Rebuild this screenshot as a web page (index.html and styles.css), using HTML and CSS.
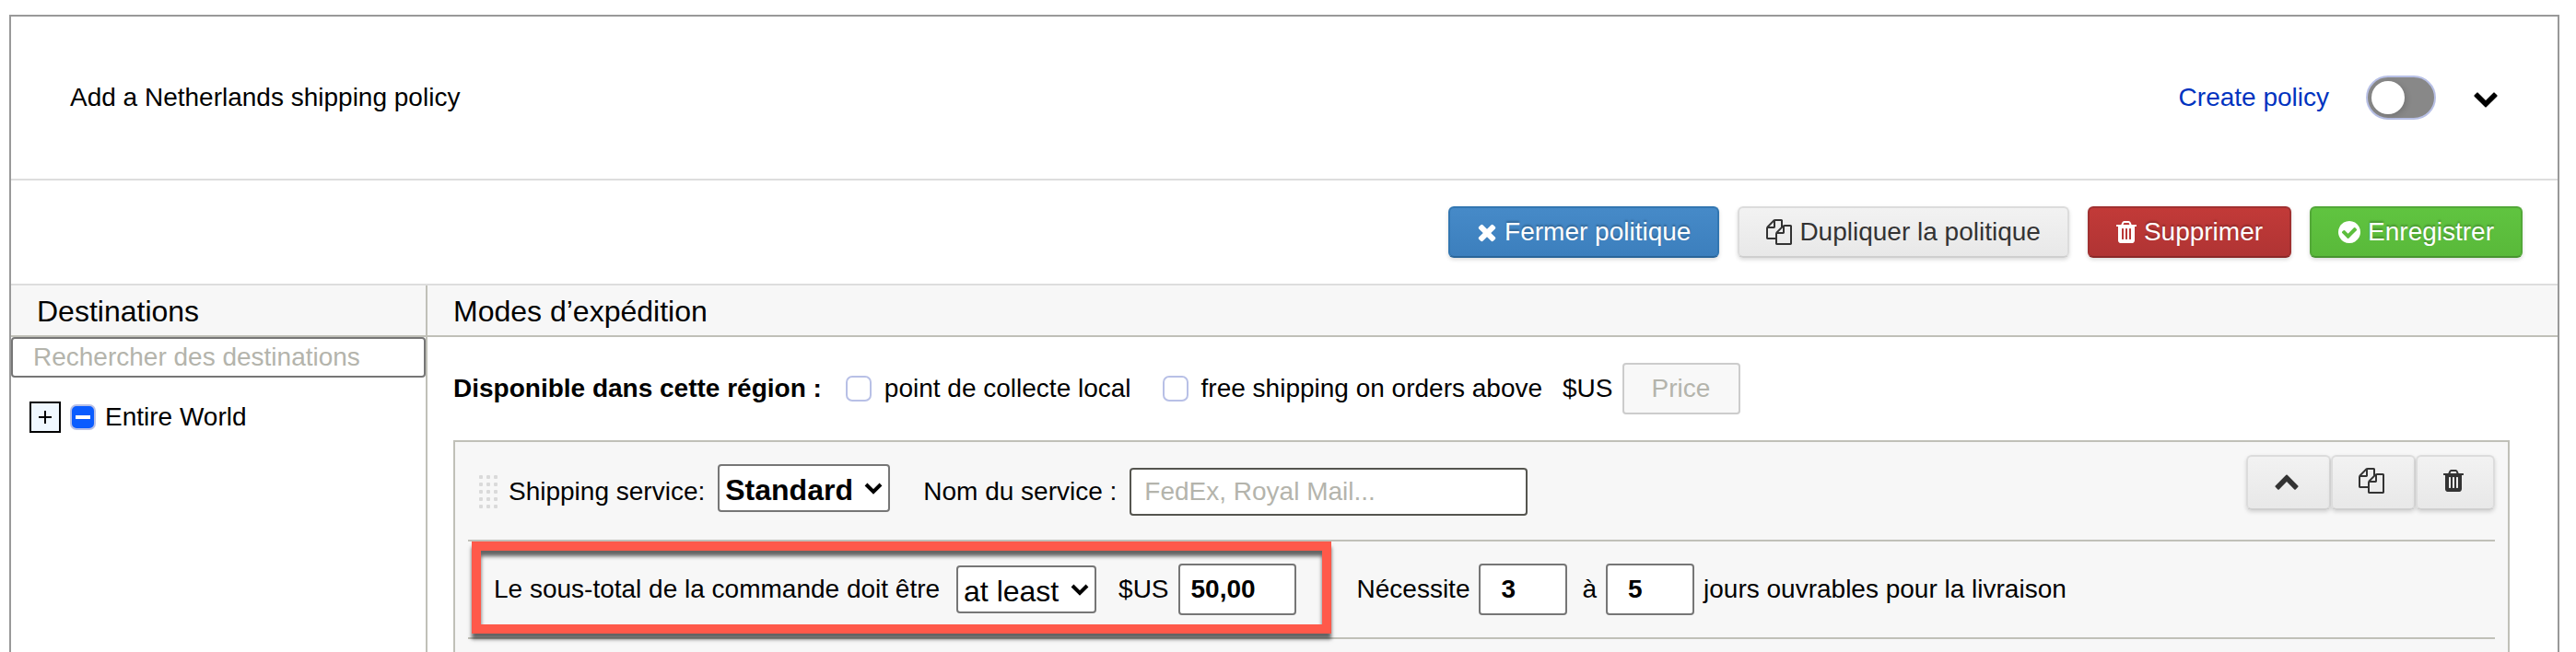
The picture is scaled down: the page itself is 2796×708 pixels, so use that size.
FILE: index.html
```html
<!DOCTYPE html>
<html lang="fr">
<head>
    <meta charset="UTF-8">
    <meta name="viewport" content="width=device-width, initial-scale=1.0">
    <title>Shipping policy</title>
    <link rel="stylesheet" href="styles.css">
</head>
<body>
    <!-- shared icon shapes -->
    <svg class="sprite" aria-hidden="true">
        <symbol id="i-times" viewBox="192 0 1408 1792"><path d="M1490 1322q0 40-28 68l-136 136q-28 28-68 28t-68-28l-294-294-294 294q-28 28-68 28t-68-28l-136-136q-28-28-28-68t28-68l294-294-294-294q-28-28-28-68t28-68l136-136q28-28 68-28t68 28l294 294 294-294q28-28 68-28t68 28l136 136q28 28 28 68t-28 68l-294 294 294 294q28 28 28 68z"/></symbol>
        <symbol id="i-copy" viewBox="0 0 1792 1792"><path d="M1696 384q40 0 68 28t28 68v1216q0 40-28 68t-68 28h-960q-40 0-68-28t-28-68v-288h-544q-40 0-68-28t-28-68v-672q0-40 20-88t48-76l408-408q28-28 76-48t88-20h416q40 0 68 28t28 68v328q68-40 128-40h416zm-544 213l-299 299h299v-299zm-640-384l-299 299h299v-299zm196 647l316-316v-416h-384v416q0 40-28 68t-68 28h-416v640h512v-256q0-40 20-88t48-76zm956 804v-1152h-384v416q0 40-28 68t-68 28h-416v640h896z"/></symbol>
        <symbol id="i-trash" viewBox="192 0 1408 1792"><path d="M704 1376v-704q0-14-9-23t-23-9h-64q-14 0-23 9t-9 23v704q0 14 9 23t23 9h64q14 0 23-9t9-23zm256 0v-704q0-14-9-23t-23-9h-64q-14 0-23 9t-9 23v704q0 14 9 23t23 9h64q14 0 23-9t9-23zm256 0v-704q0-14-9-23t-23-9h-64q-14 0-23 9t-9 23v704q0 14 9 23t23 9h64q14 0 23-9t9-23zm-544-992h448l-48-117q-7-9-17-11h-317q-10 2-17 11zm928 32v64q0 14-9 23t-23 9h-96v948q0 83-47 143.5t-113 60.5h-832q-66 0-113-58.5t-47-141.5v-952h-96q-14 0-23-9t-9-23v-64q0-14 9-23t23-9h309l70-167q15-37 54-63t79-26h320q40 0 79 26t54 63l70 167h309q14 0 23 9t9 23z"/></symbol>
        <symbol id="i-check" viewBox="128 0 1536 1792"><path d="M1412 734q0-28-18-46l-91-90q-19-19-45-19t-45 19l-408 407-226-226q-19-19-45-19t-45 19l-91 90q-18 18-18 46 0 27 18 45l362 362q19 19 45 19 27 0 46-19l543-543q18-18 18-45zm252 162q0 209-103 385.5t-279.5 279.5-385.5 103-385.5-103-279.5-279.5-103-385.5 103-385.5 279.5-279.5 385.5-103 385.5 103 279.5 279.5 103 385.5z"/></symbol>
        <symbol id="i-down" viewBox="0 0 1792 1792"><path d="M1683 808l-742 741q-19 19-45 19t-45-19l-742-741q-19-19-19-45.5t19-45.5l166-165q19-19 45-19t45 19l531 531 531-531q19-19 45-19t45 19l166 165q19 19 19 45.5t-19 45.5z"/></symbol>
        <symbol id="i-up" viewBox="0 0 1792 1792"><path d="M1683 1331l-166 165q-19 19-45 19t-45-19l-531-531-531 531q-19 19-45 19t-45-19l-166-165q-19-19-19-45.5t19-45.5l742-741q19-19 45-19t45 19l742 741q19 19 19 45.5t-19 45.5z"/></symbol>
    </svg>

    <div class="policy">
        <div class="policy-header">
            <span class="policy-title">Add a Netherlands shipping policy</span>
            <label class="create-label" for="createPolicy">Create policy</label>
            <input type="checkbox" id="createPolicy" class="toggle">
            <button type="button" class="collapse" aria-label="Ouvrir"><svg class="icon"><use href="#i-down"/></svg></button>
        </div>

        <div class="toolbar">
            <button type="button" class="btn btn-primary"><svg class="icon icon-narrow"><use href="#i-times"/></svg>Fermer politique</button>
            <button type="button" class="btn"><svg class="icon"><use href="#i-copy"/></svg>Dupliquer la politique</button>
            <button type="button" class="btn btn-danger"><svg class="icon icon-narrow"><use href="#i-trash"/></svg>Supprimer</button>
            <button type="button" class="btn btn-success"><svg class="icon icon-round"><use href="#i-check"/></svg>Enregistrer</button>
        </div>

        <div class="columns">
            <div class="destinations">
                <h2>Destinations</h2>
                <input type="text" class="search" placeholder="Rechercher des destinations" aria-label="Rechercher des destinations">
                <div class="tree-row">
                    <button type="button" class="expand" aria-label="Ouvrir">
                        <svg viewBox="0 0 14 14"><path d="M7 0v14M0 7h14"/></svg>
                    </button>
                    <input type="checkbox" id="world" class="check check-partial">
                    <label for="world">Entire World</label>
                </div>
            </div>

            <div class="methods">
                <h2>Modes d’expédition</h2>
                <div class="methods-body">
                    <div class="region">
                        <strong>Disponible dans cette région :</strong>
                        <div class="option">
                            <input type="checkbox" id="pickup" class="check">
                            <label for="pickup">point de collecte local</label>
                        </div>
                        <div class="option">
                            <input type="checkbox" id="free" class="check">
                            <label for="free">free shipping on orders above</label>
                        </div>
                        <div class="money">
                            <label for="freePrice">$US</label>
                            <input type="text" id="freePrice" class="field price center" placeholder="Price" disabled>
                        </div>
                    </div>

                    <div class="service">
                        <div class="service-row">
                            <svg class="handle" viewBox="0 0 24 40">
                                <defs>
                                    <pattern id="dots" width="8" height="8" patternUnits="userSpaceOnUse">
                                        <rect x="2" y="2" width="4" height="4" rx="1" fill="#dadada"/>
                                    </pattern>
                                </defs>
                                <rect width="24" height="40" fill="url(#dots)"/>
                            </svg>
                            <div class="pair">
                                <label for="shipService">Shipping service:</label>
                                <select id="shipService" class="select bold"><option>Standard</option></select>
                            </div>
                            <div class="pair">
                                <label for="serviceName">Nom du service :</label>
                                <input type="text" id="serviceName" class="field name" placeholder="FedEx, Royal Mail...">
                            </div>
                            <div class="btn-group">
                                <button type="button" class="btn" aria-label="Replier"><svg class="icon"><use href="#i-up"/></svg></button>
                                <button type="button" class="btn" aria-label="Dupliquer"><svg class="icon"><use href="#i-copy"/></svg></button>
                                <button type="button" class="btn" aria-label="Supprimer"><svg class="icon icon-narrow"><use href="#i-trash"/></svg></button>
                            </div>
                        </div>

                        <div class="rule-row">
                            <div class="highlight">
                                <label for="rule">Le sous-total de la commande doit être</label>
                                <select id="rule" class="select"><option>at least</option></select>
                                <div class="money">
                                    <label for="amount">$US</label>
                                    <input type="text" id="amount" class="field price bold" value="50,00">
                                </div>
                            </div>
                            <div class="delivery">
                                <label for="minDays">Nécessite</label>
                                <input type="text" id="minDays" class="field days bold" value="3">
                                <label class="to" for="maxDays">à</label>
                                <input type="text" id="maxDays" class="field days bold" value="5">
                                <span>jours ouvrables pour la livraison</span>
                            </div>
                        </div>
                    </div>
                </div>
            </div>
        </div>
    </div>
</body>
</html>
```
FILE: styles.css
```css
* {
    box-sizing: border-box;
}
body {
    margin: 0;
    padding: 16px 18px 0 10px;
    min-height: 100vh;
    display: flex;
    background: #fff;
    color: #000;
    font-family: "Liberation Sans", Arial, sans-serif;
    font-size: 28px;
    line-height: 32px;
}
button, input, select {
    font: inherit;
    color: inherit;
    margin: 0;
}
.sprite {
    display: none;
}
.icon {
    width: 28px;
    height: 28px;
    fill: currentColor;
    flex: none;
}
.icon-narrow {
    width: 22px;
}
.icon-round {
    width: 24px;
}
.policy {
    flex: 1;
    display: flex;
    flex-direction: column;
    border: 2px solid #999;
    border-bottom: 0;
}

/* header */
.policy-header {
    display: flex;
    align-items: center;
    padding: 64px;
    border-bottom: 2px solid #ddd;
}
.policy-title {
    flex: 1;
}
.create-label {
    color: #0033bf;
    margin-right: 40px;
}
.toggle {
    appearance: none;
    width: 76px;
    height: 48px;
    padding: 4px;
    border: 2px solid #b8c0e6;
    border-radius: 24px;
    background: #888;
    margin-right: 40px;
}
.toggle::before {
    content: "";
    display: block;
    width: 36px;
    height: 36px;
    border-radius: 50%;
    background: #fff;
    box-shadow: 2px 2px 6px rgba(0, 0, 0, 0.15);
}
.collapse {
    display: flex;
    padding: 0;
    border: 0;
    background: none;
}

/* buttons */
.toolbar {
    display: flex;
    justify-content: flex-end;
    gap: 20px;
    padding: 28px 38px;
    border-bottom: 2px solid #ddd;
}
.btn {
    display: flex;
    align-items: center;
    gap: 8px;
    height: 56px;
    padding: 0 29px;
    border: 2px solid #dcdcdc;
    border-bottom-color: #cfcfcf;
    border-radius: 6px;
    background: linear-gradient(#f2f2f2, #e8e8e8);
    color: #333;
    box-shadow: 0 2px 4px rgba(0, 0, 0, 0.15);
}
.btn-primary, .btn-danger, .btn-success {
    color: #fff;
    text-shadow: 0 -2px 2px rgba(0, 0, 0, 0.25);
}
.btn-primary {
    background: linear-gradient(#468ac8, #3c7fbd);
    border-color: #3276b1;
    border-bottom-color: #2a6599;
}
.btn-danger {
    background: linear-gradient(#c23a38, #b03434);
    border-color: #a03030;
    border-bottom-color: #8a2828;
}
.btn-success {
    background: linear-gradient(#60c440, #59b93a);
    border-color: #52a838;
    border-bottom-color: #47942f;
}
.btn-group {
    display: flex;
    align-self: flex-start;
    margin-left: auto;
}
.btn-group .btn {
    height: 60px;
    padding: 0 32px 4px 28px;
}

/* columns */
.columns {
    flex: 1;
    display: flex;
}
h2 {
    margin: 0;
    padding: 10px 28px 8px;
    border-bottom: 2px solid #c0c0b8;
    background: #f7f7f7;
    font-size: 32px;
    font-weight: normal;
    line-height: 36px;
}
.destinations {
    width: 452px;
    border-right: 2px solid #c0c0b8;
}
.search {
    display: block;
    width: 100%;
    height: 44px;
    padding: 0 22px;
    border: 2px solid #767676;
    border-radius: 4px;
}
::placeholder {
    color: #b4b4ac;
    opacity: 1;
}
.tree-row {
    display: flex;
    align-items: center;
    gap: 10px;
    padding: 26px 20px;
}
.expand {
    display: flex;
    align-items: center;
    justify-content: center;
    width: 34px;
    height: 34px;
    padding: 0;
    border: 2px solid #000;
    background: #f0f8ff;
}
.expand svg {
    width: 14px;
    height: 14px;
    fill: none;
    stroke: #000;
    stroke-width: 2;
}
.check {
    appearance: none;
    width: 28px;
    height: 28px;
    border: 2px solid #b8c0e6;
    border-radius: 7px;
    background: #fff;
    flex: none;
}
.check-partial {
    background: linear-gradient(#fff, #fff) center / 16px 4px no-repeat #0a5cff;
}

.methods {
    flex: 1;
    display: flex;
    flex-direction: column;
}
.methods-body {
    flex: 1;
    display: flex;
    flex-direction: column;
    padding: 0 52px 0 28px;
}
.region {
    display: flex;
    align-items: center;
    padding: 28px 0;
}
.option {
    display: flex;
    align-items: center;
    gap: 14px;
    margin-left: 26px;
}
.option + .option {
    margin-left: 34px;
}
.money {
    display: flex;
    align-items: center;
    gap: 10px;
    margin-left: 22px;
}
.field {
    height: 56px;
    border: 2px solid #767676;
    border-radius: 4px;
    background: #fff;
    padding: 0 14px;
}
.field:disabled {
    border-color: #ccc;
    background: #f8f8f8;
}
.price {
    width: 128px;
    padding: 0 12px;
}
.center {
    text-align: center;
}
.days {
    width: 96px;
    padding: 0 22px;
}
.name {
    width: 432px;
    height: 52px;
    border-color: #55554f;
}
.bold {
    font-weight: bold;
}
.select {
    appearance: none;
    height: 52px;
    padding: 4px 38px 0 6px;
    border: 2px solid #767676;
    border-radius: 4px;
    background: #fff url("data:image/svg+xml,%3Csvg xmlns='http://www.w3.org/2000/svg' width='20' height='14' viewBox='0 0 20 14'%3E%3Cpath d='M2 2l8 8 8-8' fill='none' stroke='%23000' stroke-width='4'/%3E%3C/svg%3E") right 6px top 18px no-repeat;
    font-size: 32px;
}

/* shipping service */
.service {
    flex: 1;
    padding: 0 14px;
    border: 2px solid #c0c0b8;
    border-bottom: 0;
    background: #f7f7f7;
}
.service-row, .rule-row {
    display: flex;
    border-bottom: 2px solid #c0c0b8;
}
.service-row {
    height: 108px;
    align-items: baseline;
    padding: 14px 0 12px 10px;
}
.handle {
    align-self: center;
    width: 24px;
    height: 40px;
    margin-right: 10px;
}
.pair {
    display: flex;
    align-items: baseline;
    gap: 14px;
    padding-top: 10px;
    margin-right: 36px;
}
.rule-row {
    height: 106px;
    align-items: flex-start;
}
.highlight {
    display: flex;
    align-items: center;
    gap: 10px;
    height: 100px;
    margin-left: 4px;
    padding: 4px 28px 0 14px;
    border: 10px solid #ff594a;
    box-shadow: 0 6px 4px rgba(0, 0, 0, 0.6), inset 0 6px 4px rgba(0, 0, 0, 0.6);
}
.highlight .select {
    margin-left: 8px;
}
.highlight .money {
    margin-left: 14px;
}
.delivery {
    display: flex;
    align-items: center;
    gap: 10px;
    height: 104px;
    margin-left: 28px;
}
.to {
    margin-left: 6px;
}
```
